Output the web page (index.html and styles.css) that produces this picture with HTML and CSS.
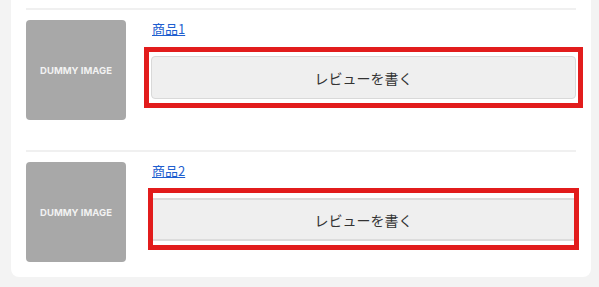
FILE: index.html
```html
<!DOCTYPE html>
<html lang="ja">
<head>
<meta charset="utf-8">
<title>レビュー</title>
<link rel="stylesheet" href="styles.css">
</head>
<body>
<div class="card">
  <div class="item">
    <div class="thumb">DUMMY IMAGE</div>
    <div class="info">
      <a class="name" href="#">商品1</a>
      <div class="btn-wrap">
        <button class="btn" type="button">レビューを書く</button>
        <span class="mark mark-1"></span>
      </div>
    </div>
  </div>
  <div class="item item-last">
    <div class="thumb">DUMMY IMAGE</div>
    <div class="info">
      <a class="name" href="#">商品2</a>
      <div class="btn-wrap">
        <button class="btn btn-flat" type="button">レビューを書く</button>
        <span class="mark mark-2"></span>
      </div>
    </div>
  </div>
</div>
</body>
</html>
```
FILE: styles.css
```css
html, body {
  margin: 0;
  padding: 0;
  background: #f3f3f3;
}
body {
  padding: 0 8px 0 11px;
  font-family: "Noto Sans CJK JP", "Noto Sans", sans-serif;
  color: #333;
}
.card {
  background: #fff;
  border-radius: 0 0 8px 8px;
  padding: 8px 15px 0;
}
.item {
  display: flex;
  gap: 25px;
  border-top: 2px solid #f0f0f0;
  padding: 10px 0 30px;
}
.item-last {
  padding-bottom: 15px;
}
.thumb {
  flex: 0 0 100px;
  height: 100px;
  border-radius: 4px;
  background: #a8a8a8;
  color: #f2f2f2;
  font-family: Inter, "Noto Sans", sans-serif;
  font-weight: 700;
  font-size: 9.5px;
  display: flex;
  align-items: center;
  justify-content: center;
}
.info {
  flex: 1;
  display: flex;
  flex-direction: column;
  align-items: flex-start;
}
.name {
  font-size: 13px;
  line-height: 18px;
  color: #1f5fcf;
  text-decoration: underline;
  margin: 0 0 18px 1px;
}
.btn-wrap {
  position: relative;
  align-self: stretch;
}
.btn {
  display: block;
  width: 100%;
  height: 43px;
  background: #efefef;
  border: 1px solid #d9d9d9;
  border-radius: 4px;
  font-family: "Noto Sans CJK JP", "Noto Sans", sans-serif;
  font-size: 14px;
  color: #333;
  padding: 0;
}
.btn-flat {
  border-radius: 0;
  border-width: 2px 0;
  border-color: #dcdcdc;
}
.mark {
  position: absolute;
  border: 5px solid #e21c1c;
  pointer-events: none;
}
.mark-1 {
  top: -9px;
  bottom: -9px;
  left: -7px;
  right: -7px;
}
.mark-2 {
  top: -10px;
  bottom: -9px;
  left: -3px;
  right: -3px;
}
```
